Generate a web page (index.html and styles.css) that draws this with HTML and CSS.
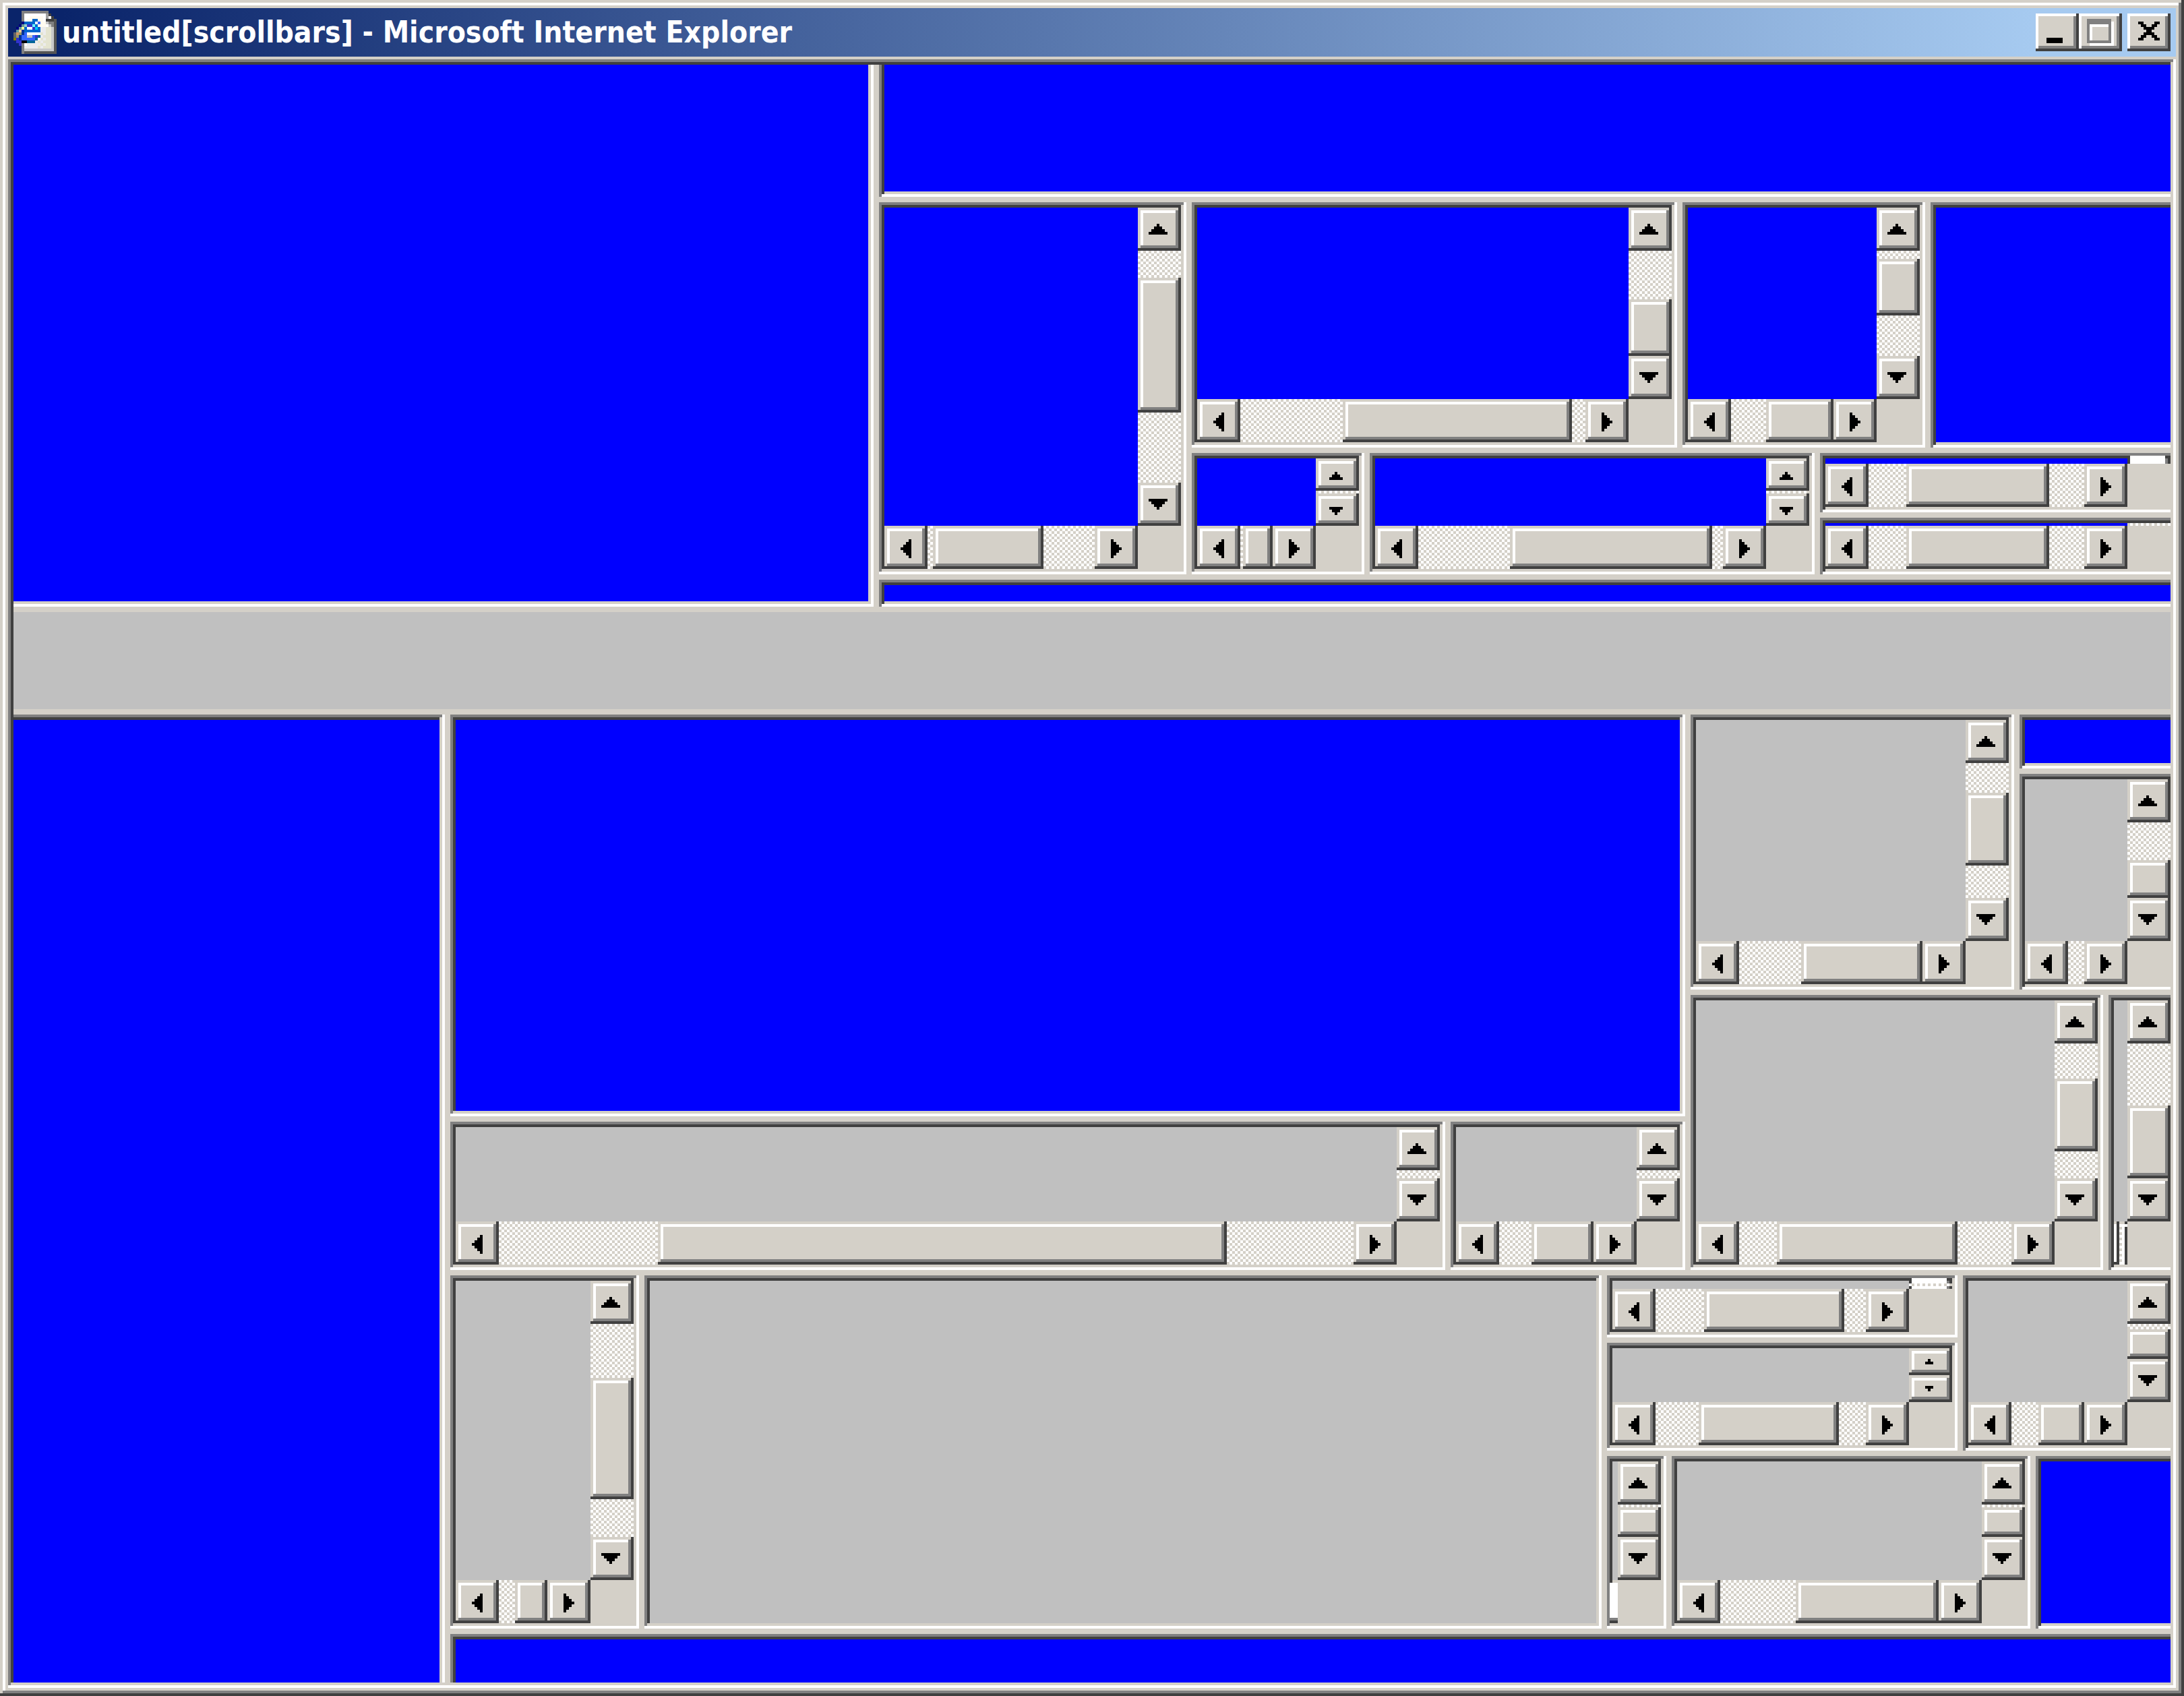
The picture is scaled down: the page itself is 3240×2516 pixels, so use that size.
FILE: index.html
```html
<!DOCTYPE html>
<html lang="en">
<head>
<meta charset="utf-8">
<title>untitled[scrollbars] - Microsoft Internet Explorer</title>
<link rel="stylesheet" href="styles.css">
</head>
<body>
<svg class="symbols" aria-hidden="true">
  <symbol id="up" viewBox="0 0 16 16"><path d="M7 6h1v1h1v1h1v1h1v1H4V9h1V8h1V7h1z"/></symbol>
  <symbol id="down" viewBox="0 0 16 16"><path d="M4 6h7v1h-1v1H9v1H8v1H7V9H6V8H5V7H4z"/></symbol>
  <symbol id="left" viewBox="0 0 16 16"><path d="M9 5h1v7H9v-1H8v-1H7V9H6V8h1V7h1V6h1z"/></symbol>
  <symbol id="right" viewBox="0 0 16 16"><path d="M6 5h1v1h1v1h1v1h1v1H9v1H8v1H7v1H6z"/></symbol>
  <symbol id="up-s" viewBox="0 0 16 12"><path d="M7 5h1v1h1v1h1v1H5V7h1V6h1z"/></symbol>
  <symbol id="down-s" viewBox="0 0 16 12"><path d="M5 5h5v1H9v1H8v1H7V7H6V6H5z"/></symbol>
  <symbol id="up-xs" viewBox="0 0 16 10"><path d="M7 4h1v1h1v1H6V5h1z"/></symbol>
  <symbol id="down-xs" viewBox="0 0 16 10"><path d="M6 4h3v1H8v1H7V5H6z"/></symbol>
</svg>

<main class="window">
  <header class="titlebar">
    <svg class="app-icon" viewBox="0 0 16 16" aria-hidden="true">
      <path fill="#fff" d="M4 1h8v3h2v10H4z"/>
      <path fill="#fffbf0" d="M6 2h5v2H6zM5 3h1v1H5zM9 4h3v2H9zM9 2h2v5H9z"/>
      <path fill="#ececec" d="M5 12h7v2H4v-1h1zM10 6h2v6h-2zM8 11h2v1H8z"/>
      <path fill="#e4e4d0" d="M12 6h2v8h-2zM10 8h1v1h-1zM11 9h1v1h-1zM10 10h1v1h-1zM11 11h1v1h-1zM9 11h1v1H9zM10 12h1v1h-1zM11 13h1v1h-1zM9 13h1v1H9z"/>
      <path fill="#c8c8c8" d="M12 4h1v1h1v1h1v9H4v-1h10V6h-1V5h-1z"/>
      <path fill="#808080" d="M3 0h10v1H4v15H3zM13 4h2v1h-2zM14 5h1v1h-1z"/>
      <path fill="#a0a0a0" d="M12 1h1v2h-1z"/>
      <path fill="#404040" d="M13 1h1v1h-1zM14 2h1v1h-1zM12 3h3v1h-3z"/>
      <path fill="#fff" d="M13 2h1v1h-1z"/>
      <path fill="#555" d="M15 3h1v13H4v-1h11z"/>
      <path fill="#06c" d="M7 3h2v1H7zM4 4h4v1H4zM8 5h1v1H8zM4 6h1v1H4zM9 6h1v1H9zM4 7h6v1H4z"/>
      <path fill="#000080" d="M3 4h1v1H3zM2 5h1v1H2zM1 6h1v1H1z"/>
      <path fill="#699" d="M3 5h1v1H3zM2 6h1v1H2zM1 7h1v1H1z"/>
      <path fill="#9cc" d="M4 5h1v1H4z"/>
      <path fill="#33c" d="M5 5h2v1H5zM7 6h1v1H7zM8 9h1v1H8zM1 10h1v1H1zM1 11h2v1H1zM2 12h1v1H2z"/>
      <path fill="#6ff" d="M7 5h1v1H7z"/>
      <path fill="#0cf" d="M8 6h1v1H8z"/>
      <path fill="#ff9" d="M3 6h1v1H3z"/>
      <path fill="#fc9" d="M2 7h1v1H2z"/>
      <path fill="#c96" d="M1 8h1v1H1z"/>
      <path fill="#996" d="M2 8h1v1H2zM1 9h1v1H1z"/>
      <path fill="#666" d="M0 8h1v2H0z"/>
      <path fill="#039" d="M3 7h1v2H3zM2 9h1v2H2z"/>
      <path fill="#36f" d="M9 4h1v1H9zM4 8h1v1H4zM3 9h2v1H3zM7 9h1v1H7zM3 10h5v1H3z"/>
      <path fill="silver" d="M5 9h2v1H5z"/>
      <path fill="#808000" d="M0 10h1v1H0z"/>
      <path fill="#069" d="M9 9h1v1H9zM8 10h1v1H8zM5 11h3v1H5z"/>
      <path fill="#000" d="M3 11h2v1H3z"/>
    </svg>
    <h1 class="title">untitled[scrollbars] - Microsoft Internet Explorer</h1>
    <button class="caption" aria-label="Minimize"><svg viewBox="0 0 16 14"><path d="M4 9h6v2H4z"/></svg></button>
    <button class="caption" aria-label="Maximize" disabled><svg viewBox="0 0 16 14"><path fill="#fff" d="M4 3h9v9H4zM5 5v6h7V5z" fill-rule="evenodd"/><path fill="#808080" d="M3 2h9v9H3zM4 4v6h7V4z" fill-rule="evenodd"/></svg></button>
    <button class="caption close" aria-label="Close"><svg viewBox="0 0 16 14"><path d="M4 3h2v1h1v1h2V4h1V3h2v1h-1v1h-1v1H9v1h1v1h1v1h1v1h-2V9H9V8H7v1H6v1H4V9h1V8h1V7h1V6H6V5H5V4H4z"/></svg></button>
  </header>

  <div class="client">
    <div class="frameset rows-page">
      <div class="frameset cols-top">
        <section class="frame blue at-top at-left"></section>
        <div class="frameset rows-top">
          <section class="frame blue at-top at-right"></section>
          <div class="frameset cols-top-panes">
            <section class="frame scroll blue">
              <div class="view"></div>
              <div class="bar v"><button class="step" aria-label="Scroll up"><svg><use href="#up"/></svg></button><i style="--n:10"></i><b style="--n:50"></b><i style="--n:26"></i><button class="step" aria-label="Scroll down"><svg><use href="#down"/></svg></button></div>
              <div class="bar h"><button class="step" aria-label="Scroll left"><svg><use href="#left"/></svg></button><i style="--n:2"></i><b style="--n:41"></b><i style="--n:19"></i><button class="step" aria-label="Scroll right"><svg><use href="#right"/></svg></button></div>
              <div class="corner"></div>
            </section>
            <div class="frameset rows-top-panes">
              <div class="frameset cols-three">
                <section class="frame scroll blue">
                  <div class="view"></div>
                  <div class="bar v"><button class="step" aria-label="Scroll up"><svg><use href="#up"/></svg></button><i style="--n:18"></i><b style="--n:21"></b><button class="step" aria-label="Scroll down"><svg><use href="#down"/></svg></button></div>
                  <div class="bar h"><button class="step" aria-label="Scroll left"><svg><use href="#left"/></svg></button><i style="--n:38"></i><b style="--n:85"></b><i style="--n:5"></i><button class="step" aria-label="Scroll right"><svg><use href="#right"/></svg></button></div>
                  <div class="corner"></div>
                </section>
                <section class="frame scroll blue">
                  <div class="view"></div>
                  <div class="bar v"><button class="step" aria-label="Scroll up"><svg><use href="#up"/></svg></button><i style="--n:3"></i><b style="--n:21"></b><i style="--n:15"></i><button class="step" aria-label="Scroll down"><svg><use href="#down"/></svg></button></div>
                  <div class="bar h"><button class="step" aria-label="Scroll left"><svg><use href="#left"/></svg></button><i style="--n:13"></i><b style="--n:25"></b><button class="step" aria-label="Scroll right"><svg><use href="#right"/></svg></button></div>
                  <div class="corner"></div>
                </section>
                <section class="frame blue at-right"></section>
              </div>
              <div class="frameset cols-short">
                <section class="frame scroll blue">
                  <div class="view"></div>
                  <div class="bar v small"><button class="step" aria-label="Scroll up"><svg><use href="#up-s"/></svg></button><i style="--n:1"></i><button class="step" aria-label="Scroll down"><svg><use href="#down-s"/></svg></button></div>
                  <div class="bar h"><button class="step" aria-label="Scroll left"><svg><use href="#left"/></svg></button><i style="--n:1"></i><b style="--n:11"></b><button class="step" aria-label="Scroll right"><svg><use href="#right"/></svg></button></div>
                  <div class="corner"></div>
                </section>
                <section class="frame scroll blue">
                  <div class="view"></div>
                  <div class="bar v small"><button class="step" aria-label="Scroll up"><svg><use href="#up-s"/></svg></button><i style="--n:1"></i><button class="step" aria-label="Scroll down"><svg><use href="#down-s"/></svg></button></div>
                  <div class="bar h"><button class="step" aria-label="Scroll left"><svg><use href="#left"/></svg></button><i style="--n:34"></i><b style="--n:75"></b><i style="--n:4"></i><button class="step" aria-label="Scroll right"><svg><use href="#right"/></svg></button></div>
                  <div class="corner"></div>
                </section>
                <div class="frameset rows-slim">
                  <section class="frame scroll blue at-right">
                    <div class="view"></div>
                    <div class="bar v squashed"><svg viewBox="0 0 16 3" preserveAspectRatio="none"><path fill="#404040" d="M0 0h16v3H0z"/><path fill="#fff" d="M1 0h13v3H1z"/><path fill="#808080" d="M14 1h1v2h-1z"/></svg></div>
                    <div class="bar h"><button class="step" aria-label="Scroll left"><svg><use href="#left"/></svg></button><i style="--n:14"></i><b style="--n:53"></b><i style="--n:13"></i><button class="step" aria-label="Scroll right"><svg><use href="#right"/></svg></button></div>
                    <div class="corner"></div>
                  </section>
                  <section class="frame scroll blue at-right">
                    <div class="view"></div>
                    <div class="bar v"></div>
                    <div class="bar h"><button class="step" aria-label="Scroll left"><svg><use href="#left"/></svg></button><i style="--n:14"></i><b style="--n:53"></b><i style="--n:13"></i><button class="step" aria-label="Scroll right"><svg><use href="#right"/></svg></button></div>
                    <div class="corner"></div>
                  </section>
                </div>
              </div>
            </div>
          </div>
          <section class="frame blue at-right"></section>
        </div>
      </div>

      <section class="band"></section>

      <div class="frameset cols-bottom">
        <section class="frame blue at-left at-bottom"></section>
        <div class="frameset rows-bottom">
          <div class="frameset rows-body">
            <div class="frameset cols-upper">
              <div class="frameset rows-stage">
                <section class="frame blue"></section>
                <div class="frameset cols-stage">
                  <section class="frame scroll">
                    <div class="view"></div>
                    <div class="bar v"><button class="step" aria-label="Scroll up"><svg><use href="#up"/></svg></button><i style="--n:3"></i><button class="step" aria-label="Scroll down"><svg><use href="#down"/></svg></button></div>
                    <div class="bar h"><button class="step" aria-label="Scroll left"><svg><use href="#left"/></svg></button><i style="--n:59"></i><b style="--n:211"></b><i style="--n:47"></i><button class="step" aria-label="Scroll right"><svg><use href="#right"/></svg></button></div>
                    <div class="corner"></div>
                  </section>
                  <section class="frame scroll">
                    <div class="view"></div>
                    <div class="bar v"><button class="step" aria-label="Scroll up"><svg><use href="#up"/></svg></button><i style="--n:3"></i><button class="step" aria-label="Scroll down"><svg><use href="#down"/></svg></button></div>
                    <div class="bar h"><button class="step" aria-label="Scroll left"><svg><use href="#left"/></svg></button><i style="--n:12"></i><b style="--n:23"></b><button class="step" aria-label="Scroll right"><svg><use href="#right"/></svg></button></div>
                    <div class="corner"></div>
                  </section>
                </div>
              </div>
              <div class="frameset rows-side">
                <div class="frameset cols-side-a">
                  <section class="frame scroll">
                    <div class="view"></div>
                    <div class="bar v"><button class="step" aria-label="Scroll up"><svg><use href="#up"/></svg></button><i style="--n:11"></i><b style="--n:27"></b><i style="--n:12"></i><button class="step" aria-label="Scroll down"><svg><use href="#down"/></svg></button></div>
                    <div class="bar h"><button class="step" aria-label="Scroll left"><svg><use href="#left"/></svg></button><i style="--n:23"></i><b style="--n:45"></b><button class="step" aria-label="Scroll right"><svg><use href="#right"/></svg></button></div>
                    <div class="corner"></div>
                  </section>
                  <div class="frameset rows-side-a">
                    <section class="frame blue at-right"></section>
                    <section class="frame scroll at-right">
                      <div class="view"></div>
                      <div class="bar v"><button class="step" aria-label="Scroll up"><svg><use href="#up"/></svg></button><i style="--n:14"></i><b style="--n:14"></b><button class="step" aria-label="Scroll down"><svg><use href="#down"/></svg></button></div>
                      <div class="bar h"><button class="step" aria-label="Scroll left"><svg><use href="#left"/></svg></button><i style="--n:6"></i><button class="step" aria-label="Scroll right"><svg><use href="#right"/></svg></button></div>
                      <div class="corner"></div>
                    </section>
                  </div>
                </div>
                <div class="frameset cols-side-b">
                  <section class="frame scroll">
                    <div class="view"></div>
                    <div class="bar v"><button class="step" aria-label="Scroll up"><svg><use href="#up"/></svg></button><i style="--n:13"></i><b style="--n:27"></b><i style="--n:10"></i><button class="step" aria-label="Scroll down"><svg><use href="#down"/></svg></button></div>
                    <div class="bar h"><button class="step" aria-label="Scroll left"><svg><use href="#left"/></svg></button><i style="--n:14"></i><b style="--n:67"></b><i style="--n:20"></i><button class="step" aria-label="Scroll right"><svg><use href="#right"/></svg></button></div>
                    <div class="corner"></div>
                  </section>
                  <section class="frame scroll at-right">
                    <div class="view"></div>
                    <div class="bar v"><button class="step" aria-label="Scroll up"><svg><use href="#up"/></svg></button><i style="--n:23"></i><b style="--n:27"></b><button class="step" aria-label="Scroll down"><svg><use href="#down"/></svg></button></div>
                    <div class="bar h"><svg viewBox="0 0 5 16" preserveAspectRatio="none"><path fill="#d4d0c8" d="M0 0h1v1H0zM3 0h1v1H3z"/><path fill="#404040" d="M1 0h1v16H0v-1h1zM4 0h1v16H4z"/><path fill="#fff" d="M0 1h1v14H0zM3 1h2v1H4v14H3z"/></svg></div>
                    <div class="corner"></div>
                  </section>
                </div>
              </div>
            </div>
            <div class="frameset cols-lower">
              <section class="frame scroll">
                <div class="view"></div>
                <div class="bar v"><button class="step" aria-label="Scroll up"><svg><use href="#up"/></svg></button><i style="--n:20"></i><b style="--n:45"></b><i style="--n:14"></i><button class="step" aria-label="Scroll down"><svg><use href="#down"/></svg></button></div>
                <div class="bar h"><button class="step" aria-label="Scroll left"><svg><use href="#left"/></svg></button><i style="--n:6"></i><b style="--n:12"></b><button class="step" aria-label="Scroll right"><svg><use href="#right"/></svg></button></div>
                <div class="corner"></div>
              </section>
              <section class="frame"></section>
              <div class="frameset rows-lower">
                <div class="frameset cols-lower-a">
                  <div class="frameset rows-lower-a">
                    <section class="frame scroll">
                      <div class="view"></div>
                      <div class="bar v squashed"><svg viewBox="0 0 16 4" preserveAspectRatio="none"><path fill="#404040" d="M0 0h1v2H0zM0 3h1v1H0zM15 0h1v2h-1zM15 3h1v1h-1zM14 0h1v1h-1z"/><path fill="#fff" d="M1 0h13v2H1zM1 3h13v1H1z"/><path fill="#808080" d="M14 1h1v1h-1zM14 3h1v1h-1z"/></svg></div>
                      <div class="bar h"><button class="step" aria-label="Scroll left"><svg><use href="#left"/></svg></button><i style="--n:18"></i><b style="--n:52"></b><i style="--n:8"></i><button class="step" aria-label="Scroll right"><svg><use href="#right"/></svg></button></div>
                      <div class="corner"></div>
                    </section>
                    <section class="frame scroll">
                      <div class="view"></div>
                      <div class="bar v tiny"><button class="step" aria-label="Scroll up"><svg><use href="#up-xs"/></svg></button><button class="step" aria-label="Scroll down"><svg><use href="#down-xs"/></svg></button></div>
                      <div class="bar h"><button class="step" aria-label="Scroll left"><svg><use href="#left"/></svg></button><i style="--n:16"></i><b style="--n:52"></b><i style="--n:10"></i><button class="step" aria-label="Scroll right"><svg><use href="#right"/></svg></button></div>
                      <div class="corner"></div>
                    </section>
                  </div>
                  <section class="frame scroll at-right">
                    <div class="view"></div>
                    <div class="bar v"><button class="step" aria-label="Scroll up"><svg><use href="#up"/></svg></button><i style="--n:2"></i><b style="--n:11"></b><button class="step" aria-label="Scroll down"><svg><use href="#down"/></svg></button></div>
                    <div class="bar h"><button class="step" aria-label="Scroll left"><svg><use href="#left"/></svg></button><i style="--n:10"></i><b style="--n:17"></b><button class="step" aria-label="Scroll right"><svg><use href="#right"/></svg></button></div>
                    <div class="corner"></div>
                  </section>
                </div>
                <div class="frameset cols-lower-b">
                  <section class="frame scroll">
                    <div class="view"></div>
                    <div class="bar v"><button class="step" aria-label="Scroll up"><svg><use href="#up"/></svg></button><i style="--n:1"></i><b style="--n:11"></b><button class="step" aria-label="Scroll down"><svg><use href="#down"/></svg></button></div>
                    <div class="bar h squashed"><svg viewBox="0 0 3 16" preserveAspectRatio="none"><path fill="#d4d0c8" d="M1 0h2v1H1z"/><path fill="#404040" d="M0 0h1v1H0zM1 15h2v1H0v-1z"/><path fill="#fff" d="M0 1h3v13H0z"/><path fill="#808080" d="M0 14h3v1H0z"/></svg></div>
                    <div class="corner"></div>
                  </section>
                  <section class="frame scroll">
                    <div class="view"></div>
                    <div class="bar v"><button class="step" aria-label="Scroll up"><svg><use href="#up"/></svg></button><i style="--n:1"></i><b style="--n:11"></b><button class="step" aria-label="Scroll down"><svg><use href="#down"/></svg></button></div>
                    <div class="bar h"><button class="step" aria-label="Scroll left"><svg><use href="#left"/></svg></button><i style="--n:28"></i><b style="--n:53"></b><button class="step" aria-label="Scroll right"><svg><use href="#right"/></svg></button></div>
                    <div class="corner"></div>
                  </section>
                  <section class="frame blue at-right"></section>
                </div>
              </div>
            </div>
          </div>
          <section class="frame blue at-right at-bottom"></section>
        </div>
      </div>
    </div>
  </div>
</main>
</body>
</html>
```
FILE: styles.css
```css
:root {
  --face: #d4d0c8;
  --light: #fff;
  --shade: #808080;
  --dark: #404040;
  --silver: silver;
  --blue: #00f;
}

* { box-sizing: border-box; }

body {
  margin: 0;
  background: var(--face);
  font-family: "DejaVu Sans Condensed", "DejaVu Sans", sans-serif;
}

svg { display: block; shape-rendering: crispEdges; }
.symbols { position: absolute; width: 0; height: 0; }

/* Window chrome */
.window {
  display: flex;
  flex-direction: column;
  height: 100vh;
  padding: 12px;
  background: var(--face);
  box-shadow:
    inset -4px -4px var(--dark),
    inset 4px 4px var(--face),
    inset -8px -8px var(--shade),
    inset 8px 8px var(--light);
}

.titlebar {
  display: flex;
  flex: none;
  align-items: center;
  height: 72px;
  padding: 0 8px;
  background: linear-gradient(to right, #0a246a 80px, #a6caf0 calc(100% - 212px));
}

.app-icon { flex: none; width: 64px; height: 64px; }

.title {
  flex: 1;
  margin: 0 0 0 8px;
  overflow: hidden;
  color: #fff;
  font-size: 44px;
  font-weight: 700;
  line-height: 64px;
  white-space: nowrap;
}

.caption {
  flex: none;
  width: 64px;
  height: 56px;
  padding: 0;
  border: 0;
  background: var(--face);
  box-shadow:
    inset -4px -4px var(--dark),
    inset 4px 4px var(--light),
    inset -8px -8px var(--shade);
}
.caption svg { width: 100%; height: 100%; }
.caption.close { margin-left: 8px; }

.client {
  display: grid;
  flex: 1;
  min-height: 0;
  margin-top: 4px;
  padding: 8px;
  box-shadow:
    inset -4px -4px var(--light),
    inset 4px 4px var(--shade),
    inset -8px -8px var(--face),
    inset 8px 8px var(--dark);
}

/* Nested framesets */
.frameset { display: grid; gap: 8px; min-width: 0; min-height: 0; }
.rows-page { grid-template-rows: 201fr 36fr 359fr; }
.cols-top { grid-template-columns: 319fr 479fr; }
.rows-top { grid-template-rows: 49fr 138fr 10fr; }
.cols-top-panes { grid-template-columns: 114fr 363fr; }
.rows-top-panes { grid-template-rows: 91fr 45fr; }
.cols-three { grid-template-columns: 180fr 90fr 89fr; }
.cols-short { grid-template-columns: 64fr 165fr 130fr; }
.rows-slim { grid-template-rows: 22fr 21fr; }
.cols-bottom { grid-template-columns: 160fr 638fr; }
.rows-bottom { grid-template-rows: 339fr 18fr; }
.rows-body { grid-template-rows: 206fr 131fr; }
.cols-upper { grid-template-columns: 458fr 178fr; }
.rows-stage { grid-template-rows: 149fr 55fr; }
.cols-stage { grid-template-columns: 369fr 87fr; }
.rows-side { grid-template-rows: 102fr 102fr; }
.cols-side-a { grid-template-columns: 120fr 56fr; }
.rows-side-a { grid-template-rows: 20fr 80fr; }
.cols-side-b { grid-template-columns: 153fr 23fr; }
.cols-lower { grid-template-columns: 70fr 355fr 209fr; }
.rows-lower { grid-template-rows: 65fr 64fr; }
.cols-lower-a { grid-template-columns: 130fr 77fr; }
.rows-lower-a { grid-template-rows: 23fr 40fr; }
.cols-lower-b { grid-template-columns: 22fr 133fr 50fr; }

.band { background: var(--silver); }

/* Frames: sunken on every side that does not meet the window edge */
.frame {
  --page: var(--silver);
  min-width: 0;
  min-height: 0;
  padding: 8px;
  background: var(--page) content-box;
  box-shadow:
    inset -4px -4px var(--light),
    inset 4px 4px var(--shade),
    inset -8px -8px var(--face),
    inset 8px 8px var(--dark);
}
.blue { --page: var(--blue); }

.at-right {
  padding-right: 0;
  box-shadow:
    inset 4px 4px var(--shade),
    inset 0 -4px var(--light),
    inset 8px 8px var(--dark),
    inset 0 -8px var(--face);
}
.at-right.at-top {
  padding-top: 0;
  box-shadow:
    inset 4px 0 var(--shade),
    inset 0 -4px var(--light),
    inset 8px 0 var(--dark),
    inset 0 -8px var(--face);
}
.at-right.at-bottom {
  padding-bottom: 0;
  box-shadow: inset 4px 4px var(--shade), inset 8px 8px var(--dark);
}
.at-left.at-top {
  padding: 0 8px 8px 0;
  box-shadow: inset -4px -4px var(--light), inset -8px -8px var(--face);
}
.at-left.at-bottom {
  padding: 8px 8px 0 0;
  box-shadow:
    inset -4px 0 var(--light),
    inset 0 4px var(--shade),
    inset -8px 0 var(--face),
    inset 0 8px var(--dark);
}

/* Scrolling frames: the dither shows through wherever a track is bare */
.scroll {
  display: grid;
  grid-template: minmax(0, 1fr) 64px / minmax(0, 1fr) 64px;
  background:
    conic-gradient(var(--light) 25%, var(--face) 0 50%, var(--light) 0 75%, var(--face) 0)
    0 0 / 8px 8px content-box content-box;
}
.view { background: var(--page); }
.corner { background: var(--face); }

.bar { display: flex; min-width: 0; min-height: 0; }
.v { flex-direction: column; }
.bar i { flex: var(--n) 0 0; }
.bar b { flex: var(--n) 0 0; }
.step { flex: none; width: 64px; height: 64px; padding: 0; border: 0; }
.step svg { width: 100%; height: 100%; }
.small .step { height: 48px; }
.tiny .step { height: 40px; }

.step,
.bar b {
  background: var(--face);
  box-shadow:
    inset -4px -4px var(--dark),
    inset 4px 4px var(--face),
    inset -8px -8px var(--shade),
    inset 8px 8px var(--light);
}

/* Bars with no room left for their buttons spill over the frame edge */
.bar > svg { flex: 1; min-width: 0; min-height: 0; }
.v.squashed { margin-top: -4px; }
.h.squashed { margin-left: -4px; }
```
